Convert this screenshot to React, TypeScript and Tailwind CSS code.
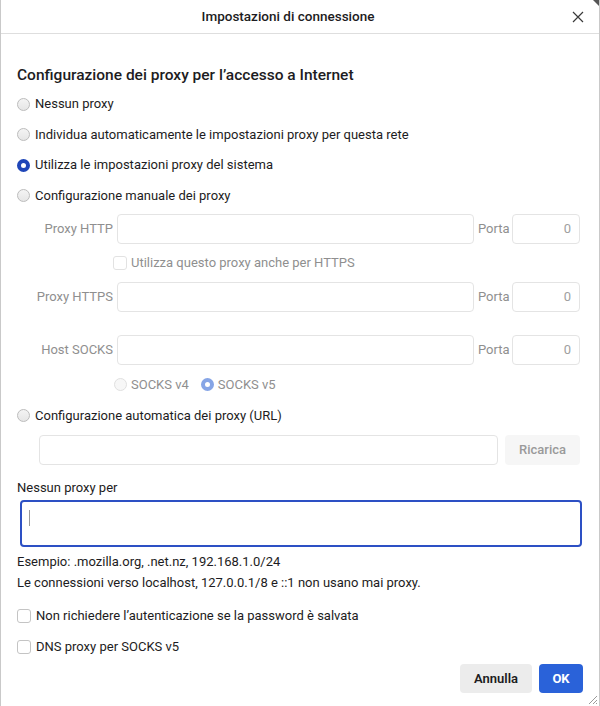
import React from 'react'

const font = { fontFamily: 'Roboto, "Noto Sans", sans-serif' }

const Radio = ({ checked = false, disabled = false }: { checked?: boolean; disabled?: boolean }) => {
  if (checked) {
    return (
      <span
        className={`inline-block w-[13px] h-[13px] shrink-0 rounded-full bg-white border-[4px] ${
          disabled ? 'border-[#86a5e6]' : 'border-[#1f46b8]'
        }`}
      />
    )
  }
  return (
    <span
      className={`inline-block w-[13px] h-[13px] shrink-0 rounded-full border ${
        disabled ? 'border-[#e0e0e0] bg-[#f7f7f7]' : 'border-[#bcbcbc] bg-gradient-to-b from-[#f4f4f4] to-[#e6e6e6]'
      }`}
    />
  )
}

const Checkbox = ({ disabled = false }: { disabled?: boolean }) => (
  <span
    className={`inline-block w-[14px] h-[14px] shrink-0 rounded-[3px] border bg-white ${
      disabled ? 'border-[#e2e2e2]' : 'border-[#c4c4c4]'
    }`}
  />
)

const ProxyRow = ({ label }: { label: string }) => (
  <div className="flex items-center h-[30px]">
    <span className="w-[100px] pr-[4px] text-right text-[#8f8f8f] whitespace-nowrap">{label}</span>
    <div className="w-[357px] h-[30px] rounded-[4px] border border-[#e4e4e4] bg-white" />
    <span className="w-[38px] pl-[4px] text-[#8f8f8f]">Porta</span>
    <div className="w-[68px] h-[30px] rounded-[4px] border border-[#e4e4e4] bg-white flex items-center justify-end pr-[8px] text-[#a0a0a0]">
      0
    </div>
  </div>
)

const App: React.FC = () => {
  return (
    <div
      className="w-[600px] h-[706px] bg-white border-x border-[#c9c9c9] text-[13px] text-[#1d1c22] relative overflow-hidden"
      style={font}
    >
      {/* Header */}
      <div className="h-[34px] border-b border-[#dedede] flex items-center justify-center pr-[24px] relative">
        <span className="text-[13.5px] font-medium">Impostazioni di connessione</span>
        <svg className="absolute right-[15px] top-[11px]" width="12" height="12" viewBox="0 0 12 12">
          <path d="M1 1L11 11M11 1L1 11" stroke="#3a3a3a" strokeWidth="1.2" />
        </svg>
      </div>

      <div className="pl-[16px] pr-[19px]">
        <h2 className="mt-[32px] text-[15.5px] font-medium leading-[18px]">
          Configurazione dei proxy per l’accesso a Internet
        </h2>

        <div className="mt-[12px] flex flex-col gap-[14.6px]">
          <label className="flex items-center gap-[5px] h-[16px]">
            <Radio />
            <span>Nessun proxy</span>
          </label>
          <label className="flex items-center gap-[5px] h-[16px]">
            <Radio />
            <span>Individua automaticamente le impostazioni proxy per questa rete</span>
          </label>
          <label className="flex items-center gap-[5px] h-[16px]">
            <Radio checked />
            <span>Utilizza le impostazioni proxy del sistema</span>
          </label>
          <label className="flex items-center gap-[5px] h-[16px]">
            <Radio />
            <span>Configurazione manuale dei proxy</span>
          </label>
        </div>

        <div className="mt-[10px]">
          <ProxyRow label="Proxy HTTP" />
          <div className="flex items-center gap-[4px] h-[16px] mt-[11px] pl-[96px]">
            <Checkbox disabled />
            <span className="text-[#8f8f8f]">Utilizza questo proxy anche per HTTPS</span>
          </div>
          <div className="mt-[11px]">
            <ProxyRow label="Proxy HTTPS" />
          </div>
          <div className="mt-[23px]">
            <ProxyRow label="Host SOCKS" />
          </div>
          <div className="flex items-center h-[16px] mt-[12px] pl-[97px] text-[#8f8f8f]">
            <Radio disabled />
            <span className="ml-[4px]">SOCKS v4</span>
            <span className="ml-[12px] flex">
              <Radio checked disabled />
            </span>
            <span className="ml-[4px]">SOCKS v5</span>
          </div>
        </div>

        <label className="mt-[15px] flex items-center gap-[5px] h-[16px]">
          <Radio />
          <span>Configurazione automatica dei proxy (URL)</span>
        </label>

        <div className="mt-[11px] ml-[22px] flex items-center gap-[7px]">
          <div className="w-[459px] h-[30px] rounded-[4px] border border-[#e4e4e4] bg-white" />
          <div className="w-[75px] h-[30px] rounded-[4px] bg-[#f6f6f6] flex items-center justify-center font-medium text-[#9a9a9a]">
            Ricarica
          </div>
        </div>

        <div className="mt-[15px] h-[16px] leading-[16px]">Nessun proxy per</div>
        <div className="mt-[4px] ml-[3px] w-[562px] h-[47px] rounded-[4px] border-2 border-[#2d50c4] bg-white flex items-start pl-[7px] pt-[8px]">
          <span className="w-px h-[16px] bg-[#9a9a9a]" />
        </div>

        <div className="mt-[7px] h-[16px] leading-[16px]">Esempio: .mozilla.org, .net.nz, 192.168.1.0/24</div>
        <div className="mt-[5px] h-[16px] leading-[16px]">
          Le connessioni verso localhost, 127.0.0.1/8 e ::1 non usano mai proxy.
        </div>

        <label className="mt-[17px] flex items-center gap-[5px] h-[16px]">
          <Checkbox />
          <span>Non richiedere l’autenticazione se la password è salvata</span>
        </label>
        <label className="mt-[15px] flex items-center gap-[5px] h-[16px]">
          <Checkbox />
          <span>DNS proxy per SOCKS v5</span>
        </label>

        <div className="mt-[9px] flex justify-end gap-[7px] mr-[-3px]">
          <button className="w-[72px] h-[29px] rounded-[4px] bg-[#ececec] font-semibold text-[#1d1c22]">
            Annulla
          </button>
          <button className="w-[44px] h-[29px] rounded-[4px] bg-[#2a62d9] font-bold text-white">OK</button>
        </div>
      </div>

      {/* resize grip */}
      <svg className="absolute right-[1px] bottom-[1px]" width="12" height="12" viewBox="0 0 12 12">
        <path d="M11 3L3 11M11 7L7 11M11 10L10 11" stroke="#9a9a9a" strokeWidth="1" />
      </svg>
      <div className="absolute right-0 top-0 w-0 h-0 border-t-[6px] border-l-[6px] border-t-[#555] border-l-transparent" />
    </div>
  )
}

export default App
